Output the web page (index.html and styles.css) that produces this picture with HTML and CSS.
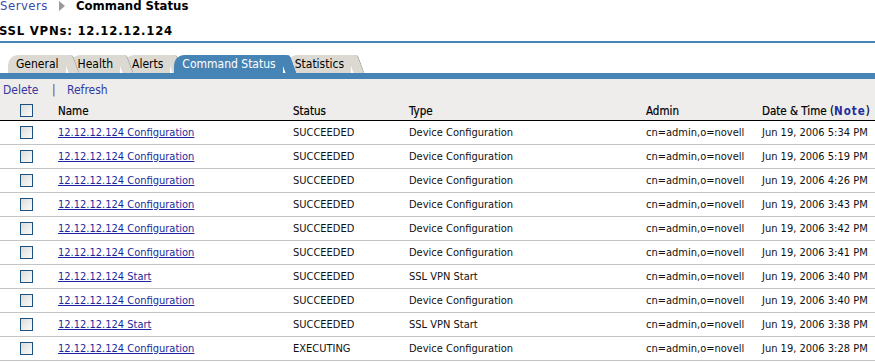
FILE: index.html
```html
<!DOCTYPE html>
<html lang="en">
<head>
  <meta charset="UTF-8">
  <title>Command Status</title>
  <link rel="stylesheet" href="styles.css">
</head>
<body>

<div class="crumbs">
  <a href="#">Servers</a>
  <span class="arrow"></span>
  <b>Command Status</b>
</div>

<h1 class="title">SSL VPNs: 12.12.12.124</h1>

<div class="tabs">
  <div class="tab">General</div>
  <div class="tab">Health</div>
  <div class="tab">Alerts</div>
  <div class="tab active">Command Status</div>
  <div class="tab">Statistics</div>
</div>

<div class="toolbar">
  <a href="#">Delete</a>
  <span class="sep">|</span>
  <a href="#">Refresh</a>
</div>

<table class="grid">
  <colgroup>
    <col class="c-check">
    <col class="c-name">
    <col class="c-status">
    <col class="c-type">
    <col class="c-admin">
    <col class="c-date">
  </colgroup>
  <thead>
    <tr>
      <th><span class="box"></span></th>
      <th>Name</th>
      <th>Status</th>
      <th>Type</th>
      <th>Admin</th>
      <th>Date &amp; Time (<a class="note" href="#">Note</a>)</th>
    </tr>
  </thead>
  <tbody id="rows"></tbody>
</table>

<script>
  const rows = [
    ['Configuration', 'SUCCEEDED', 'Device Configuration', '5:34 PM'],
    ['Configuration', 'SUCCEEDED', 'Device Configuration', '5:19 PM'],
    ['Configuration', 'SUCCEEDED', 'Device Configuration', '4:26 PM'],
    ['Configuration', 'SUCCEEDED', 'Device Configuration', '3:43 PM'],
    ['Configuration', 'SUCCEEDED', 'Device Configuration', '3:42 PM'],
    ['Configuration', 'SUCCEEDED', 'Device Configuration', '3:41 PM'],
    ['Start', 'SUCCEEDED', 'SSL VPN Start', '3:40 PM'],
    ['Configuration', 'SUCCEEDED', 'Device Configuration', '3:40 PM'],
    ['Start', 'SUCCEEDED', 'SSL VPN Start', '3:38 PM'],
    ['Configuration', 'EXECUTING', 'Device Configuration', '3:28 PM']
  ];

  const body = document.getElementById('rows');
  rows.forEach(function (r) {
    const tr = document.createElement('tr');
    tr.innerHTML =
      '<td><span class="box"></span></td>' +
      '<td><a href="#">12.12.12.124 ' + r[0] + '</a></td>' +
      '<td>' + r[1] + '</td>' +
      '<td>' + r[2] + '</td>' +
      '<td>cn=admin,o=novell</td>' +
      '<td>Jun 19, 2006 ' + r[3] + '</td>';
    body.appendChild(tr);
  });
</script>

</body>
</html>
```

FILE: styles.css
```css
body {
  margin: 0;
  background: #fff;
  color: #000;
  font-family: 'DejaVu Sans Condensed', 'DejaVu Sans', sans-serif;
  font-stretch: condensed;
  overflow: hidden;
}

a { color: #1f2f9c; }

.crumbs {
  margin-top: -2px;
  font-size: 13px;
  line-height: 16px;
  display: flex;
  align-items: center;
}
.crumbs a { text-decoration: none; color: #3d4aa8; letter-spacing: 0.5px; }
.crumbs .arrow {
  width: 0;
  height: 0;
  border-top: 5px solid transparent;
  border-bottom: 5px solid transparent;
  border-left: 6px solid #999;
  margin: 0 11px 0 11px;
}

.title {
  margin: 9px 0 0 -1px;
  padding-bottom: 2px;
  font-size: 13px;
  line-height: 16px;
  font-weight: bold;
  letter-spacing: 0.75px;
  border-bottom: 2px solid #4784b6;
}

.tabs {
  display: flex;
  margin-top: 12px;
  padding-left: 8px;
  border-bottom: 6px solid #4784b6;
}

.tab {
  position: relative;
  height: 18px;
  line-height: 18px;
  font-size: 12px;
  padding: 0 7px 0 8px;
  margin-right: 4px;
  background: #dcd9d2;
  border-top-left-radius: 10px;
}
.tab::after {
  content: "";
  position: absolute;
  top: 0;
  right: -7px;
  width: 10px;
  height: 100%;
  background: inherit;
  border-right: 1px solid #a9a59d;
  border-top-right-radius: 3px;
  transform: skewX(20deg);
  transform-origin: top left;
  z-index: -1;
}
.tab:nth-child(1) { z-index: 5; }
.tab:nth-child(2) { z-index: 4; }
.tab:nth-child(3) { z-index: 3; }
.tab:nth-child(5) { z-index: 1; }
.tab.active {
  z-index: 6;
  background: #4784b6;
  color: #fff;
}
.tab.active::after { border-right-color: #4784b6; }

.toolbar {
  background: #eeedeb;
  height: 22px;
  line-height: 22px;
  font-size: 12px;
  padding-left: 3px;
}
.toolbar a { text-decoration: none; color: #3339a0; }
.toolbar .sep { color: #7a2a7a; margin: 0 8px 0 10px; }

.grid {
  width: 100%;
  border-collapse: collapse;
  table-layout: fixed;
  font-size: 11px;
}
.c-check { width: 58px; }
.c-name { width: 235px; }
.c-status { width: 116px; }
.c-type { width: 237px; }
.c-admin { width: 116px; }

.grid th {
  background: #eeedeb;
  height: 19px;
  text-align: left;
  font-weight: normal;
  padding: 0;
  border-bottom: 1px solid #000;
  font-size: 11.5px;
  -webkit-text-stroke: 0.2px #000;
}
.grid th .note { text-decoration: none; font-weight: bold; letter-spacing: 1px; -webkit-text-stroke: 0; }

.grid td {
  height: 23px;
  padding: 0;
  border-bottom: 1px solid #c4c4c4;
  color: #111;
}
.grid td a { color: #1a2a9c; }

.box {
  display: block;
  width: 11px;
  height: 11px;
  margin-left: 20px;
  border: 1px solid #1c5180;
  background: linear-gradient(135deg, #dcdcd8, #fbfbfb);
}
```
